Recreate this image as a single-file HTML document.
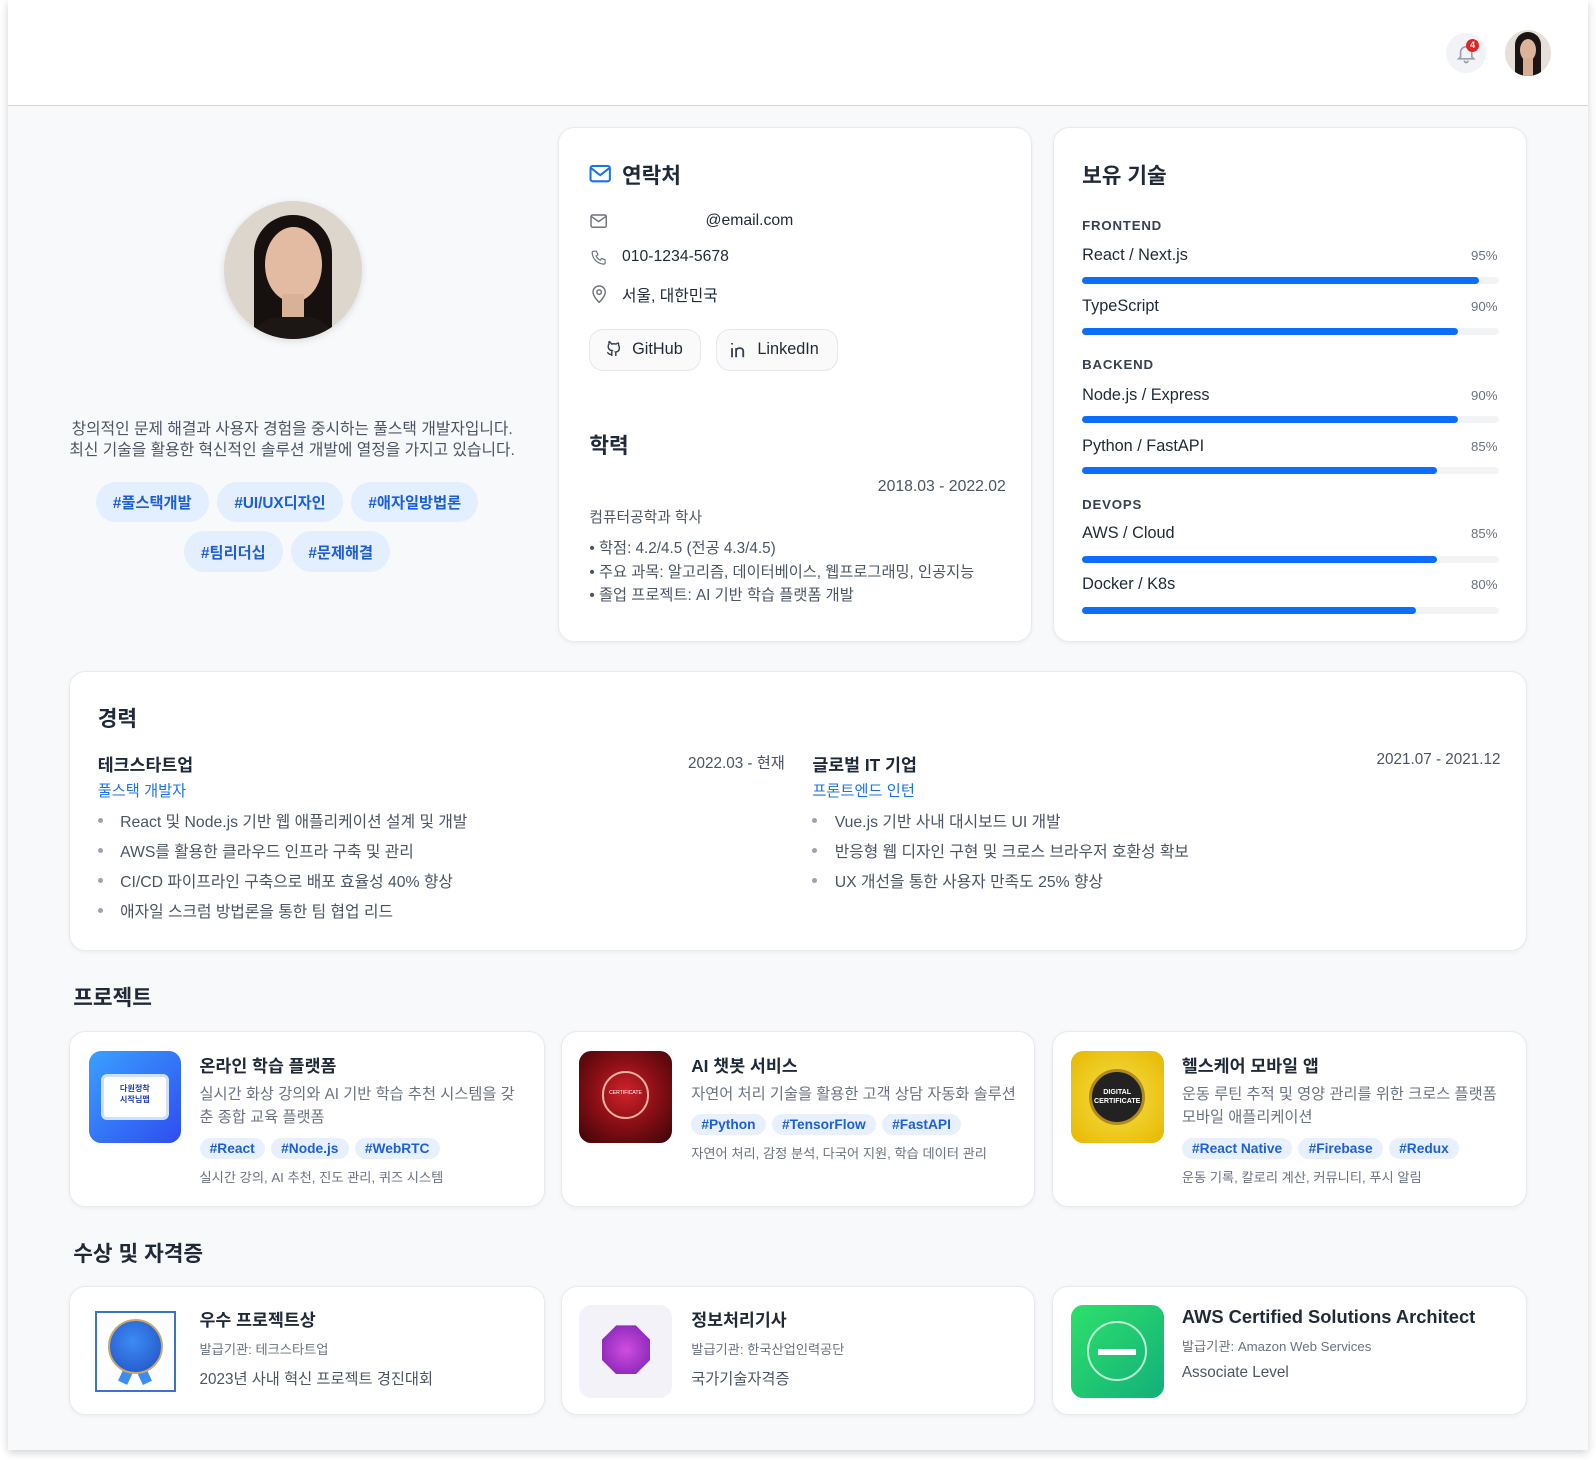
<!DOCTYPE html>
<html><head><meta charset="utf-8"><style>
*{box-sizing:border-box;margin:0;padding:0}
html,body{width:1596px;height:1460px;overflow:hidden;background:#fff}
body{font-family:"Liberation Sans","Noto Sans CJK KR",sans-serif;color:#1f2937}
#w{zoom:1.018;width:1568px;height:1434px;position:relative}
.frame{position:absolute;left:8px;top:0;width:1552px;height:1424px;background:#f8f9fb;box-shadow:0 3px 8px rgba(0,0,0,.18);overflow:hidden}
.hdr{position:absolute;left:0;top:0;width:1552px;height:104px;background:#fff;border-bottom:1.5px solid #d4d6da}
.a{position:absolute}
.card{position:absolute;background:#fff;border:1px solid #e8eaee;border-radius:16px;box-shadow:0 1px 4px rgba(0,0,0,.05)}
.h{font-size:21px;font-weight:700;color:#1f2937}
.gray{color:#4b5563}
.tag{display:inline-block;background:#e3eeff;color:#1d5fd6;font-weight:700;border-radius:20px}
.bar{position:absolute;left:28px;width:410px;height:7px;border-radius:4px;background:#f1f3f5}
.bar i{display:block;height:7px;border-radius:4px;background:#0d6efd}
.lbl{position:absolute;left:28px;font-size:13px;font-weight:700;letter-spacing:.8px;color:#374151}
.sk{position:absolute;left:28px;right:28px;font-size:16px;color:#1f2937}
.sk span{float:right;font-size:13px;color:#6b7280;margin-top:2px}
ul.b{list-style:none}
ul.b li{position:relative;padding-left:22px;font-size:15.5px;color:#4b5563;height:29.5px}
ul.b li:before{content:"";position:absolute;left:0;top:8px;width:5px;height:5px;border-radius:50%;background:#9ca3af}
.pt{font-size:17px;font-weight:700}
.pd{font-size:15px;color:#6b7280;line-height:23px}
.ptag{display:inline-block;background:#e8f0fd;color:#1d5fd6;font-weight:700;font-size:13.5px;padding:3px 10px;border-radius:12px;margin-right:6px}
.pf{font-size:13px;color:#6b7280}
.img{position:absolute;border-radius:12px;overflow:hidden}
</style></head><body><div id="w"><div class="frame">
<div class="hdr">
 <div class="a" style="left:1412px;top:32px;width:40px;height:40px;border-radius:50%;background:#f1f3f6"></div>
 <svg class="a" style="left:1421px;top:41px" width="22" height="22" viewBox="0 0 24 24" fill="none" stroke="#9aa1ab" stroke-width="1.8"><path d="M6 16V11a6 6 0 0 1 12 0v5l2 2H4z"/><path d="M10 20a2 2 0 0 0 4 0"/></svg>
 <div class="a" style="left:1432px;top:38px;width:13px;height:13px;border-radius:50%;background:#dc2626;color:#fff;font-size:9px;font-weight:700;text-align:center;line-height:13px">4</div>
 <div class="a" style="left:1470px;top:29px;width:46px;height:46px;border-radius:50%;background:#e7e0d8;overflow:hidden">
  <div class="a" style="left:10px;top:2px;width:26px;height:46px;border-radius:13px 13px 4px 4px;background:#1a1412"></div>
  <div class="a" style="left:15px;top:9px;width:16px;height:22px;border-radius:50%;background:#dcb49a"></div>
  <div class="a" style="left:18px;top:28px;width:10px;height:18px;background:#d6ad93"></div>
 </div>
</div>

<!-- profile -->
<div class="a" style="left:212px;top:197px;width:136px;height:136px;border-radius:50%;background:#ddd6cc;overflow:hidden;box-shadow:0 2px 8px rgba(0,0,0,.12)">
 <div class="a" style="left:30px;top:14px;width:76px;height:140px;border-radius:38px 38px 10px 10px;background:#16110f"></div>
 <div class="a" style="left:40px;top:26px;width:56px;height:74px;border-radius:50%;background:#e2bba2"></div>
 <div class="a" style="left:57px;top:92px;width:22px;height:26px;background:#d9b197"></div>
 <div class="a" style="left:26px;top:114px;width:84px;height:30px;border-radius:30px 30px 0 0;background:#1c1614"></div>
</div>
<div class="a gray" style="left:54px;top:413px;width:450px;text-align:center;font-size:15.5px;line-height:20px;color:#4b5563">창의적인 문제 해결과 사용자 경험을 중시하는 풀스택 개발자입니다.<br>최신 기술을 활용한 혁신적인 솔루션 개발에 열정을 가지고 있습니다.</div>
<div class="a" style="left:80px;top:473px;width:388px;text-align:center;font-size:15px">
 <span class="tag" style="padding:9px 17px;margin:0 4px">#풀스택개발</span><span class="tag" style="padding:9px 17px;margin:0 4px">#UI/UX디자인</span><span class="tag" style="padding:9px 17px;margin:0 4px">#애자일방법론</span>
</div>
<div class="a" style="left:80px;top:522px;width:388px;text-align:center;font-size:15px">
 <span class="tag" style="padding:9px 17px;margin:0 4px">#팀리더십</span><span class="tag" style="padding:9px 17px;margin:0 4px">#문제해결</span>
</div>

<!-- contact -->
<div class="card" style="left:540px;top:125px;width:466px;height:506px">
 <svg class="a" style="left:30px;top:35px" width="22" height="20" viewBox="0 0 22 20" fill="none" stroke="#1a73e8" stroke-width="2"><rect x="1.5" y="2" width="19" height="15" rx="2"/><path d="M2 4l9 7 9-7"/></svg>
 <div class="a h" style="left:62px;top:30px">연락처</div>
 <svg class="a" style="left:31px;top:84px" width="17" height="14" viewBox="0 0 17 14" fill="none" stroke="#6b7280" stroke-width="1.4"><rect x="1" y="1" width="15" height="12" rx="1.5"/><path d="M1.5 2.5l7 5 7-5"/></svg>
 <div class="a" style="left:144px;top:82px;font-size:15.5px">@email.com</div>
 <svg class="a" style="left:31px;top:119px" width="17" height="17" viewBox="0 0 24 24" fill="none" stroke="#6b7280" stroke-width="1.6"><path d="M5 3h4l2 5-2.5 1.5a11 11 0 0 0 6 6L16 13l5 2v4a2 2 0 0 1-2 2A17 17 0 0 1 3 5a2 2 0 0 1 2-2z"/></svg>
 <div class="a" style="left:62px;top:118px;font-size:15.5px">010-1234-5678</div>
 <svg class="a" style="left:32px;top:154px" width="16" height="18" viewBox="0 0 16 18" fill="none" stroke="#6b7280" stroke-width="1.4"><path d="M8 17s6-5.5 6-10A6 6 0 0 0 2 7c0 4.5 6 10 6 10z"/><circle cx="8" cy="7" r="2.2"/></svg>
 <div class="a" style="left:62px;top:152px;font-size:15.5px">서울, 대한민국</div>
 <div class="a" style="left:30px;top:197px;width:110px;height:41px;border:1px solid #e5e7eb;border-radius:14px;background:#fafafa"></div>
 <svg class="a" style="left:45px;top:208px" width="17" height="18" viewBox="0 0 24 24" fill="none" stroke="#374151" stroke-width="2"><path d="M9 19c-4 1.5-4-2-6-2.5m12 5v-3.5c0-1 .1-1.4-.5-2 2.8-.3 5.5-1.4 5.5-6a4.6 4.6 0 0 0-1.3-3.2 4.2 4.2 0 0 0-.1-3.2s-1-.3-3.4 1.3a11.6 11.6 0 0 0-6 0C6.8 1.2 5.8 1.5 5.8 1.5a4.2 4.2 0 0 0-.1 3.2A4.6 4.6 0 0 0 4.4 8c0 4.6 2.7 5.7 5.5 6-.6.6-.6 1.2-.5 2V21.5"/></svg>
 <div class="a" style="left:72px;top:208px;font-size:16px">GitHub</div>
 <div class="a" style="left:154px;top:197px;width:120px;height:41px;border:1px solid #e5e7eb;border-radius:14px;background:#fafafa"></div>
 <svg class="a" style="left:168px;top:209px" width="18" height="17" viewBox="0 0 18 17" fill="none" stroke="#374151" stroke-width="1.8"><path d="M2 7v9M2 2v1.5M6 16V7M6 10c0-2 1.5-3 3.5-3S13 8 13 10v6"/></svg>
 <div class="a" style="left:195px;top:208px;font-size:16px">LinkedIn</div>
 <div class="a h" style="left:30px;top:295px">학력</div>
 <div class="a" style="right:25px;top:344px;font-size:15.5px;color:#4b5563">2018.03 - 2022.02</div>
 <div class="a" style="left:30px;top:371px;font-size:14.5px;color:#4b5563">컴퓨터공학과 학사</div>
 <div class="a" style="left:30px;top:402px;font-size:15px;color:#4b5563;line-height:23px">• 학점: 4.2/4.5 (전공 4.3/4.5)<br>• 주요 과목: 알고리즘, 데이터베이스, 웹프로그래밍, 인공지능<br>• 졸업 프로젝트: AI 기반 학습 플랫폼 개발</div>
</div>

<!-- skills -->
<div class="card" style="left:1026px;top:125px;width:466px;height:506px">
 <div class="a h" style="left:28px;top:30px">보유 기술</div>
 <div class="lbl" style="top:88px">FRONTEND</div>
 <div class="sk" style="top:116px">React / Next.js<span>95%</span></div>
 <div class="bar" style="top:146px"><i style="width:95%"></i></div>
 <div class="sk" style="top:166px">TypeScript<span>90%</span></div>
 <div class="bar" style="top:196px"><i style="width:90%"></i></div>
 <div class="lbl" style="top:225px">BACKEND</div>
 <div class="sk" style="top:253px">Node.js / Express<span>90%</span></div>
 <div class="bar" style="top:283px"><i style="width:90%"></i></div>
 <div class="sk" style="top:303px">Python / FastAPI<span>85%</span></div>
 <div class="bar" style="top:333px"><i style="width:85%"></i></div>
 <div class="lbl" style="top:362px">DEVOPS</div>
 <div class="sk" style="top:389px">AWS / Cloud<span>85%</span></div>
 <div class="bar" style="top:420px"><i style="width:85%"></i></div>
 <div class="sk" style="top:439px">Docker / K8s<span>80%</span></div>
 <div class="bar" style="top:470px"><i style="width:80%"></i></div>
</div>

<!-- experience -->
<div class="card" style="left:60px;top:659px;width:1432px;height:275px">
 <div class="a h" style="left:27px;top:30px">경력</div>
 <div class="a" style="left:27px;top:78px;width:675px">
  <div style="font-size:17px;font-weight:700">테크스타트업<span style="float:right;font-size:15px;font-weight:400;color:#4b5563">2022.03 - 현재</span></div>
  <div style="font-size:15px;color:#1a73e8;margin-top:3px">풀스택 개발자</div>
  <ul class="b" style="margin-top:8px"><li>React 및 Node.js 기반 웹 애플리케이션 설계 및 개발</li><li>AWS를 활용한 클라우드 인프라 구축 및 관리</li><li>CI/CD 파이프라인 구축으로 배포 효율성 40% 향상</li><li>애자일 스크럼 방법론을 통한 팀 협업 리드</li></ul>
 </div>
 <div class="a" style="left:729px;top:78px;width:676px">
  <div style="font-size:17px;font-weight:700">글로벌 IT 기업<span style="float:right;font-size:15px;font-weight:400;color:#4b5563">2021.07 - 2021.12</span></div>
  <div style="font-size:15px;color:#1a73e8;margin-top:3px">프론트엔드 인턴</div>
  <ul class="b" style="margin-top:8px"><li>Vue.js 기반 사내 대시보드 UI 개발</li><li>반응형 웹 디자인 구현 및 크로스 브라우저 호환성 확보</li><li>UX 개선을 통한 사용자 만족도 25% 향상</li></ul>
 </div>
</div>

<div class="a h" style="left:64px;top:964px">프로젝트</div>
<!-- projects -->
<div class="card" style="left:60px;top:1013px;width:467px;height:173px">
 <div class="img" style="left:18px;top:18px;width:91px;height:91px;background:linear-gradient(135deg,#3aa0ff,#2e4df0)">
  <div class="a" style="left:12px;top:23px;width:67px;height:45px;background:#fff;border-radius:6px;border:3px solid #cfe0ff;text-align:center;font-size:8px;color:#1d3fb8;font-weight:700;line-height:11px;padding-top:6px">다원정착<br>시작님맵</div>
 </div>
 <div class="a" style="left:127px;top:19px;width:320px">
  <div class="pt">온라인 학습 플랫폼</div>
  <div class="pd" style="margin-top:6px">실시간 화상 강의와 AI 기반 학습 추천 시스템을 갖춘 종합 교육 플랫폼</div>
  <div style="margin-top:8px"><span class="ptag">#React</span><span class="ptag">#Node.js</span><span class="ptag">#WebRTC</span></div>
  <div class="pf" style="margin-top:8px">실시간 강의, AI 추천, 진도 관리, 퀴즈 시스템</div>
 </div>
</div>
<div class="card" style="left:543px;top:1013px;width:466px;height:173px">
 <div class="img" style="left:17px;top:18px;width:91px;height:91px;background:radial-gradient(circle at 50% 45%,#d0232b 0,#8c0f16 45%,#3a0508 100%)">
  <div class="a" style="left:22px;top:20px;width:47px;height:47px;border-radius:50%;border:2px solid #f0b0a0;color:#fff;font-size:5px;text-align:center;line-height:40px">CERTIFICATE</div>
 </div>
 <div class="a" style="left:127px;top:19px;width:320px">
  <div class="pt">AI 챗봇 서비스</div>
  <div class="pd" style="margin-top:6px">자연어 처리 기술을 활용한 고객 상담 자동화 솔루션</div>
  <div style="margin-top:8px"><span class="ptag">#Python</span><span class="ptag">#TensorFlow</span><span class="ptag">#FastAPI</span></div>
  <div class="pf" style="margin-top:8px">자연어 처리, 감정 분석, 다국어 지원, 학습 데이터 관리</div>
 </div>
</div>
<div class="card" style="left:1025px;top:1013px;width:467px;height:173px">
 <div class="img" style="left:18px;top:18px;width:91px;height:91px;background:radial-gradient(circle,#f7e04a,#e6b800)">
  <div class="a" style="left:18px;top:18px;width:55px;height:55px;border-radius:50%;background:#222;border:3px solid #b08a20;color:#fff;font-size:7px;font-weight:700;text-align:center;line-height:9px;padding-top:16px">DIGITAL<br>CERTIFICATE</div>
 </div>
 <div class="a" style="left:127px;top:19px;width:320px">
  <div class="pt">헬스케어 모바일 앱</div>
  <div class="pd" style="margin-top:6px">운동 루틴 추적 및 영양 관리를 위한 크로스 플랫폼 모바일 애플리케이션</div>
  <div style="margin-top:8px"><span class="ptag">#React Native</span><span class="ptag">#Firebase</span><span class="ptag">#Redux</span></div>
  <div class="pf" style="margin-top:8px">운동 기록, 칼로리 계산, 커뮤니티, 푸시 알림</div>
 </div>
</div>

<div class="a h" style="left:64px;top:1215px">수상 및 자격증</div>
<!-- awards -->
<div class="card" style="left:60px;top:1263px;width:467px;height:127px">
 <div class="a" style="left:24px;top:24px;width:80px;height:79px;border:2px solid #3b73c9;background:#fff">
  <div class="a" style="left:26px;top:44px;width:10px;height:26px;background:#3b8df0;transform:rotate(25deg)"></div>
  <div class="a" style="left:40px;top:44px;width:10px;height:26px;background:#3b8df0;transform:rotate(-25deg)"></div>
  <div class="a" style="left:11px;top:6px;width:54px;height:54px;border-radius:50%;background:radial-gradient(circle at 45% 40%,#3d8bf5,#1f4fc0);border:2px solid #c9a86a"></div>
 </div>
 <div class="a" style="left:127px;top:19px">
  <div class="pt">우수 프로젝트상</div>
  <div class="pf" style="margin-top:8px">발급기관: 테크스타트업</div>
  <div style="margin-top:9px;font-size:15px;color:#4b5563">2023년 사내 혁신 프로젝트 경진대회</div>
 </div>
</div>
<div class="card" style="left:543px;top:1263px;width:466px;height:127px">
 <div class="img" style="left:17px;top:18px;width:91px;height:91px;background:#f3f2f8">
  <div class="a" style="left:22px;top:20px;width:48px;height:48px;background:radial-gradient(circle,#d04de0,#7a1fb0);clip-path:polygon(30% 0,70% 0,100% 30%,100% 70%,70% 100%,30% 100%,0 70%,0 30%)"></div>
 </div>
 <div class="a" style="left:127px;top:19px">
  <div class="pt">정보처리기사</div>
  <div class="pf" style="margin-top:8px">발급기관: 한국산업인력공단</div>
  <div style="margin-top:9px;font-size:15px;color:#4b5563">국가기술자격증</div>
 </div>
</div>
<div class="card" style="left:1025px;top:1263px;width:467px;height:127px">
 <div class="img" style="left:18px;top:18px;width:91px;height:91px;background:linear-gradient(135deg,#2ee06a,#12b07a)">
  <div class="a" style="left:16px;top:16px;width:59px;height:59px;border-radius:50%;border:2px solid rgba(255,255,255,.7)"></div>
  <div class="a" style="left:27px;top:43px;width:37px;height:6px;background:#fff"></div>
 </div>
 <div class="a" style="left:127px;top:19px">
  <div class="pt" style="font-size:18px">AWS Certified Solutions Architect</div>
  <div class="pf" style="margin-top:8px">발급기관: Amazon Web Services</div>
  <div style="margin-top:9px;font-size:15px;color:#4b5563">Associate Level</div>
 </div>
</div>
</div></div></body></html>
